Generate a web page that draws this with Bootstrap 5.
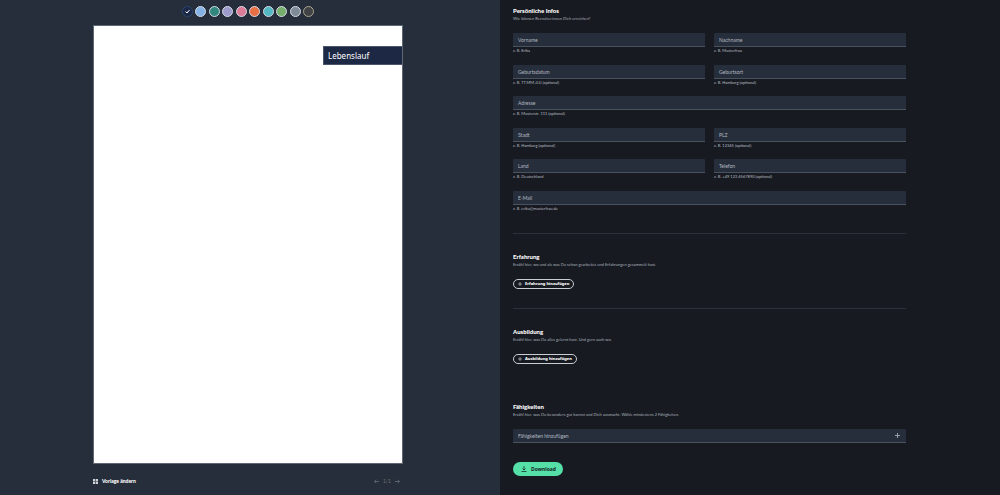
<!DOCTYPE html>
<html lang="de">
<head>
<meta charset="utf-8">
<meta name="viewport" content="width=device-width, initial-scale=1">
<title>Lebenslauf</title>
<link href="https://cdn.jsdelivr.net/npm/bootstrap@5.3.0/dist/css/bootstrap.min.css" rel="stylesheet">
<style>
:root{--panel:#272e3b;--ink:#171a21;--rule:#2b303a;--line:#48535f;--muted:#a9b1ba;--mint:#55e0a8}
body{background:var(--ink);color:#fff;font-family:Lato,"Noto Sans",sans-serif;font-size:5px;line-height:8px}
button,input,label{font-family:inherit}
.preview{background:var(--panel);border-bottom:1px solid #1d222c}
.preview-inner{width:62%;margin-left:18.6%}
.swatches{width:133px;height:25px;padding-top:6px}
.swatch{width:11px;height:11px;border:1px solid #d3dbe3;background:var(--c)}
.swatch svg{width:5px;height:5px}
.paper{background:#fff;border:1px solid #5e6874;aspect-ratio:309/438;padding-top:20px}
.banner{width:79px;height:19px;background:#1d2845;border:1px solid #4b566a;border-right:0;padding-left:4px;font-family:"Noto Sans",sans-serif;font-size:8px;line-height:17px}
.foot{height:34px}
.foot button{font-size:5px;line-height:8px;font-weight:900}
.pager{color:#69727e;padding-right:3px}
.editor{padding:7px 9.4% 0 1.3%}
h2{font-size:6px;line-height:8px;font-weight:900;margin:0}
.sub{font-size:4px;line-height:7px;color:var(--muted);margin:0}
.fields{display:grid;grid-template-columns:1fr 1fr;column-gap:9px;align-content:space-between;min-height:179px;margin-top:11px}
.wide{grid-column:1/-1}
.box{position:relative}
.box input{display:block;width:100%;height:14px;padding:0 5px;border:0;border-bottom:1px solid var(--line);border-radius:1px 1px 0 0;background:var(--panel);color:#fff;font-size:5px}
.box label{position:absolute;left:5px;top:3px;color:#b1b9c2;font-size:5px;line-height:8px}
.box button{position:absolute;right:6px;top:4px;color:#969fab}
.hint{font-size:4px;line-height:7px;color:#b8bec5}
.divider{border:0;border-top:1px solid var(--rule);opacity:1;margin:0}
.add{height:10px;margin-top:11px;padding:0 4px;gap:3px;border:1px solid #c9cdd2;background:none;color:#fff;font-family:"Noto Sans",sans-serif;font-size:4px;line-height:8px;font-weight:800}
.download{height:14px;margin-top:19px;padding:0 7px 0 8px;gap:4px;background:var(--mint);color:#14261f;font-family:"Noto Sans",sans-serif;font-size:5px;line-height:8px;font-weight:700}
svg{display:block;flex:none;fill:none;stroke:currentColor}
</style>
</head>
<body>
<main class="row g-0 min-vh-100">
<section class="col-6 preview">
 <div class="preview-inner">
  <div class="swatches d-flex justify-content-between mx-auto">
   <button aria-label="Dunkelblau" class="swatch rounded-circle p-0 d-flex align-items-center justify-content-center text-white" style="--c:#1b2947;border-color:#29456b"><svg viewBox="0 0 10 10" stroke-width="2"><path d="M1 5l3 3 5-6"/></svg></button>
   <button aria-label="Hellblau" class="swatch rounded-circle p-0" style="--c:#85b3e6"></button>
   <button aria-label="Petrol" class="swatch rounded-circle p-0" style="--c:#32887f"></button>
   <button aria-label="Flieder" class="swatch rounded-circle p-0" style="--c:#9d9bcb"></button>
   <button aria-label="Rosa" class="swatch rounded-circle p-0" style="--c:#dc7c99"></button>
   <button aria-label="Orange" class="swatch rounded-circle p-0" style="--c:#e97045"></button>
   <button aria-label="Türkis" class="swatch rounded-circle p-0" style="--c:#53b8c1"></button>
   <button aria-label="Grün" class="swatch rounded-circle p-0" style="--c:#76af6d"></button>
   <button aria-label="Grau" class="swatch rounded-circle p-0" style="--c:#808b98"></button>
   <button aria-label="Anthrazit" class="swatch rounded-circle p-0" style="--c:#404345;border-color:#aaa78c"></button>
  </div>
  <div class="paper"><div class="banner ms-auto">Lebenslauf</div></div>
  <div class="foot d-flex align-items-center justify-content-between">
   <button class="border-0 bg-transparent text-white p-0 d-flex align-items-center gap-1"><svg width="5" height="5" viewBox="0 0 10 10" style="fill:#d0d4da;stroke:none"><path d="M0 0h4.4v4.4H0zM5.6 0H10v4.4H5.6zM0 5.6h4.4V10H0zM5.6 5.6H10V10H5.6z"/></svg>Vorlage ändern</button>
   <div class="pager d-flex align-items-center gap-1">
    <button aria-label="Zurück" class="border-0 bg-transparent p-0 text-reset"><svg width="5" height="5" viewBox="0 0 10 10" stroke-width="1.5"><path d="M10 5H1M4.5 1.5L1 5l3.500 3.500"/></svg></button><span>1/1</span>
    <button aria-label="Weiter" class="border-0 bg-transparent p-0 text-reset"><svg width="5" height="5" viewBox="0 0 10 10" stroke-width="1.5"><path d="M0 5h9M5.500 1.500L9 5 5.500 8.500"/></svg></button>
   </div>
  </div>
 </div>
</section>
<form class="col-6 editor">
 <h2>Persönliche Infos</h2>
 <p class="sub">Wie können Recruiter:innen Dich erreichen?</p>
 <div class="fields">
  <div><div class="box"><input id="vn" type="text"><label for="vn">Vorname</label></div><div class="hint">z. B. Erika</div></div>
  <div><div class="box"><input id="nn" type="text"><label for="nn">Nachname</label></div><div class="hint">z. B. Musterfrau</div></div>
  <div><div class="box"><input id="gd" type="text"><label for="gd">Geburtsdatum</label></div><div class="hint">z. B. TT.MM.JJJJ (optional)</div></div>
  <div><div class="box"><input id="go" type="text"><label for="go">Geburtsort</label></div><div class="hint">z. B. Hamburg (optional)</div></div>
  <div class="wide"><div class="box"><input id="ad" type="text"><label for="ad">Adresse</label></div><div class="hint">z. B. Musterstr. 111 (optional)</div></div>
  <div><div class="box"><input id="st" type="text"><label for="st">Stadt</label></div><div class="hint">z. B. Hamburg (optional)</div></div>
  <div><div class="box"><input id="pl" type="text"><label for="pl">PLZ</label></div><div class="hint">z. B. 12345 (optional)</div></div>
  <div><div class="box"><input id="la" type="text"><label for="la">Land</label></div><div class="hint">z. B. Deutschland</div></div>
  <div><div class="box"><input id="te" type="tel"><label for="te">Telefon</label></div><div class="hint">z. B. +49 123 4567890 (optional)</div></div>
  <div class="wide"><div class="box"><input id="em" type="email"><label for="em">E-Mail</label></div><div class="hint">z. B. erika@musterfrau.de</div></div>
 </div>
 <hr class="divider" style="margin:21px 0 19px">
 <h2>Erfahrung</h2>
 <p class="sub">Erzähl hier, wo und als was Du schon gearbeitet und Erfahrungen gesammelt hast.</p>
 <button type="button" class="add rounded-pill d-flex align-items-center"><svg width="4" height="4" viewBox="0 0 8 8"><path d="M4 0v8M0 4h8"/></svg>Erfahrung hinzufügen</button>
 <hr class="divider" style="margin:19px 0 19px">
 <h2>Ausbildung</h2>
 <p class="sub">Erzähl hier, was Du alles gelernt hast. Und gern auch wo.</p>
 <button type="button" class="add rounded-pill d-flex align-items-center"><svg width="4" height="4" viewBox="0 0 8 8"><path d="M4 0v8M0 4h8"/></svg>Ausbildung hinzufügen</button>
 <h2 style="margin-top:39px">Fähigkeiten</h2>
 <p class="sub">Erzähl hier, was Du besonders gut kannst und Dich ausmacht. Wähle mindestens 2 Fähigkeiten.</p>
 <div class="box" style="margin-top:11px"><input id="fk" type="text"><label for="fk">Fähigkeiten hinzufügen</label><button type="button" aria-label="Hinzufügen" class="border-0 bg-transparent p-0"><svg width="5" height="5" viewBox="0 0 10 10" stroke-width="2"><path d="M5 0v10M0 5h10"/></svg></button></div>
 <button type="button" class="download border-0 rounded-pill d-flex align-items-center"><svg width="6" height="6" viewBox="0 0 12 12" stroke-width="1.500"><path d="M6 0v8M3 5l3 3 3-3M1 11h10"/></svg>Download</button>
</form>
</main>
<script src="https://cdn.jsdelivr.net/npm/bootstrap@5.3.0/dist/js/bootstrap.bundle.min.js"></script>
</body>
</html>
